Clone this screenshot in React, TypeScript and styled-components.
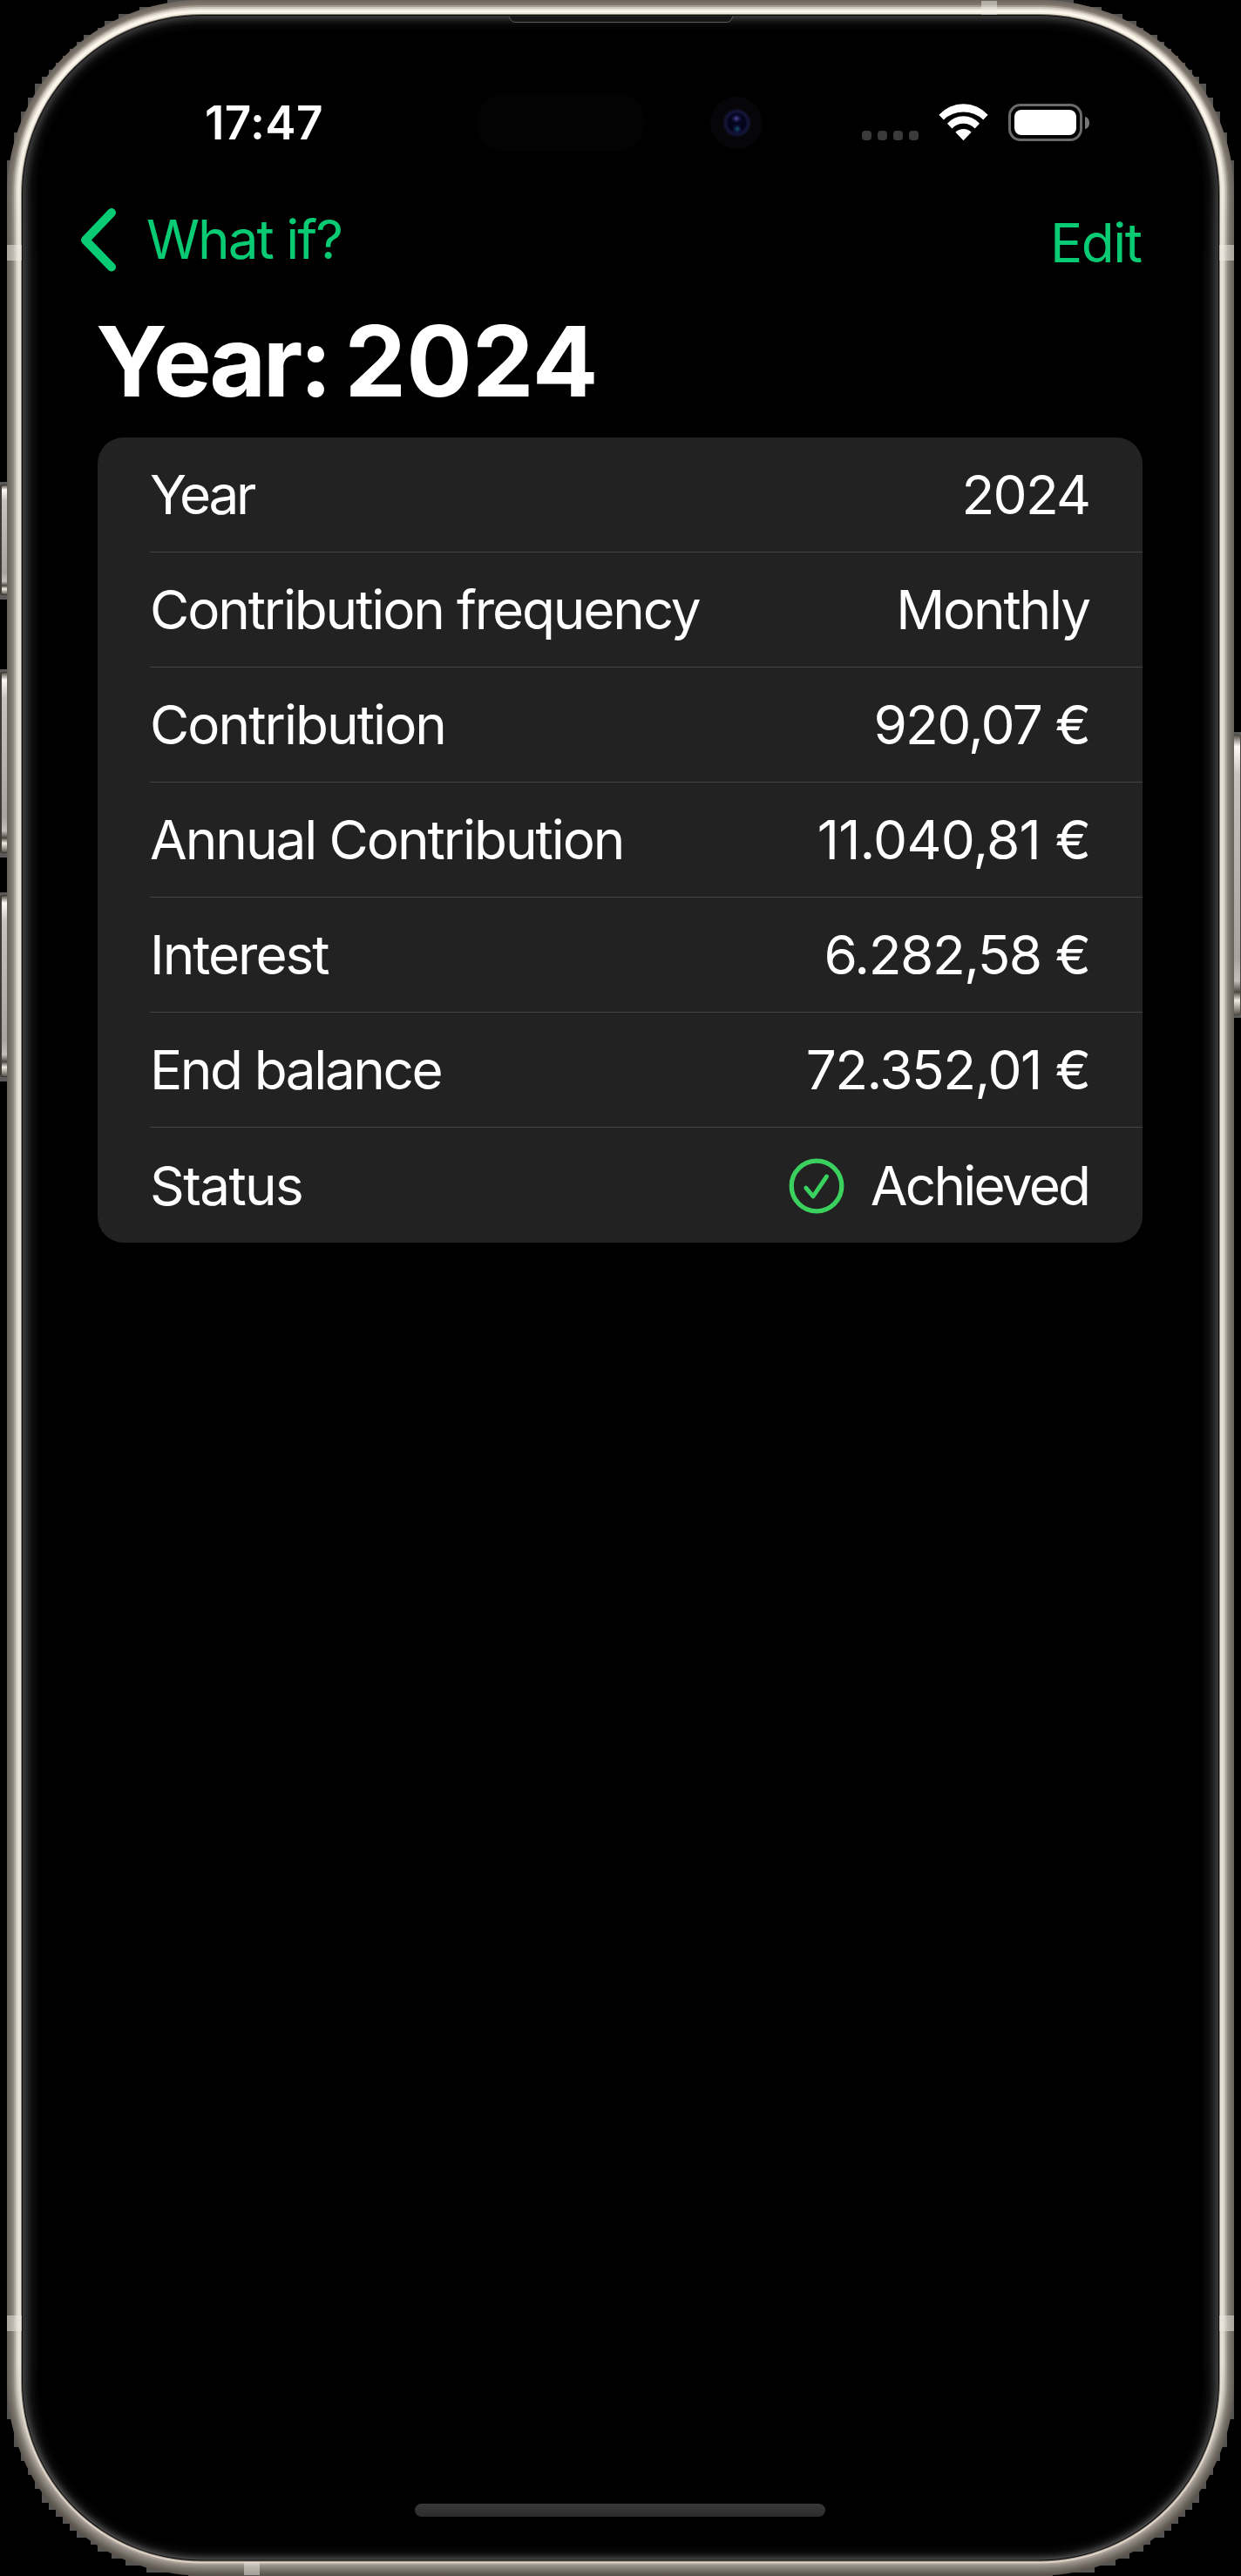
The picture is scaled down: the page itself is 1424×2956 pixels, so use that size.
import React from 'react';
import styled, { createGlobalStyle } from 'styled-components';

const GlobalStyle = createGlobalStyle`
  * { box-sizing: border-box; }
  html, body { margin: 0; background: #000; }
  body { font-family: Inter, "Liberation Sans", sans-serif; color: #fff; }
`;

const Stage = styled.div`
  position: relative;
  width: 1424px;
  height: 2956px;
  overflow: hidden;
  background: #000;
`;

const FrameSvg = styled.svg`
  position: absolute;
  inset: 0;
`;

const Screen = styled.main`
  position: relative;
  display: flex;
  flex-direction: column;
  height: 100%;
  padding: 106px 113px 68px 112px;
`;

const StatusBar = styled.header`
  display: flex;
  align-items: center;
  justify-content: space-between;
  height: 72px;
  padding: 0 61px 0 123px;
`;

const Label = styled.span<{ $size?: number; $weight?: number; $track?: number }>`
  font-size: ${p => p.$size ?? 62}px;
  font-weight: ${p => p.$weight ?? 400};
  letter-spacing: ${p => p.$track ?? 0}px;
  margin-right: ${p => -(p.$track ?? 0)}px;
  line-height: 1.2;
  white-space: nowrap;
`;

const Indicators = styled.div`
  display: flex;
  align-items: center;
  height: 43px;
  margin-bottom: 3px;
`;

const Signal = styled.div`
  display: flex;
  align-self: flex-end;
  gap: 7px;
  margin: 0 23px 1px 0;
`;

const Dot = styled.i`
  width: 11px;
  height: 11px;
  border-radius: 4px;
  background: #3a3a3a;
`;

const Battery = styled.div`
  width: 85px;
  height: 43px;
  margin-left: 23px;
  padding: 4px;
  border: 3px solid #6a6a6a;
  border-radius: 14px;
`;

const Charge = styled.div`
  height: 100%;
  border-radius: 8px;
  background: #fff;
`;

const Nub = styled.div`
  width: 5px;
  height: 14px;
  margin-left: 3px;
  border-radius: 0 5px 5px 0 / 0 7px 7px 0;
  background: #787878;
`;

const NavBar = styled.nav`
  display: flex;
  align-items: flex-start;
  justify-content: space-between;
  height: 142px;
  padding-top: 60px;
  color: #08cb73;
`;

const NavButton = styled.button<{ $back?: boolean }>`
  display: flex;
  align-items: center;
  gap: 35px;
  margin: ${p => (p.$back ? '0 0 0 -21px' : '4px 0 0 0')};
  padding: 0;
  border: 0;
  background: none;
  color: inherit;
  font-family: inherit;
`;

const Title = styled.h1`
  margin: 26px 0 0 -2px;
  height: 156px;
  font-size: 112px;
  font-weight: 700;
  line-height: 136px;
  letter-spacing: -3.6px;
  word-spacing: -5px;
  white-space: nowrap;
`;

const Digits = styled.span`
  letter-spacing: 0.2px;
`;

const Card = styled.section`
  display: flex;
  flex-direction: column;
  height: 924px;
  padding-left: 60px;
  border-radius: 30px;
  background: #222;
`;

const Row = styled.div`
  display: flex;
  align-items: center;
  justify-content: space-between;
  height: 132px;
  padding: 2px 59px 0 0;
  border-bottom: 1px solid #444;
  &:last-child { border-bottom: 0; }
`;

const Value = styled.div`
  display: flex;
  align-items: center;
  gap: 30px;
`;

const HomeBar = styled.div`
  width: 471px;
  height: 15px;
  margin: auto auto 0;
  border-radius: 8px;
  background: linear-gradient(#383838, #2c2c2c);
`;

const rows = [
  { name: 'Year', value: '2024', nameTrack: -3.3, valueTrack: -1.8 },
  { name: 'Contribution frequency', value: 'Monthly', nameTrack: -2.15, valueTrack: -2.2 },
  { name: 'Contribution', value: '920,07 €', nameTrack: -1.95, valueTrack: -1.75 },
  { name: 'Annual Contribution', value: '11.040,81 €', nameTrack: -2.05, valueTrack: -0.8 },
  { name: 'Interest', value: '6.282,58 €', nameTrack: -2, valueTrack: -1.5 },
  { name: 'End balance', value: '72.352,01 €', nameTrack: -2.4, valueTrack: -1.5 },
  { name: 'Status', value: 'Achieved', nameTrack: -1.6, valueTrack: -2.75, done: true },
];

// Titanium band, from the outer edge inwards: inset, then top / side / bottom tones.
const rings: [number, string, string, string][] = [
  [0, '#6f6860', '#69645d', '#5c554f'],
  [2, '#766f66', '#726d66', '#665f58'],
  [4, '#80786e', '#7d7870', '#706961'],
  [6, '#a39b8f', '#8e897f', '#7c756d'],
  [8, '#cfc8bc', '#aaa599', '#88817a'],
  [10, '#ece5da', '#cfcbbf', '#958e86'],
  [12, '#fff8ee', '#e3dfd2', '#a9a097'],
  [14, '#f2ebdf', '#e6e2d6', '#dfd4c8'],
  [16, '#8a8378', '#8f8a80', '#8a8178'],
  [17, '#0a0a0a', '#0c0c0c', '#050505'],
  [18, '#303030', '#393b3b', '#484848'],
  [19, '#343434', '#343636', '#3a3a3a'],
  [20, '#2a2a2a', '#2e2f2f', '#303030'],
  [22, '#1e1e1e', '#252626', '#1e1e1e'],
  [24, '#141414', '#1d1d1d', '#121212'],
  [26, '#0c0c0c', '#151515', '#0a0a0a'],
  [28, '#060606', '#0e0e0e', '#050505'],
  [31, '#030303', '#080808', '#020202'],
  [34, '#000', '#030303', '#000'],
  [37, '#000', '#000', '#000'],
];

// Left half of the 8px stepped silhouette; the right half is its mirror.
const stepsTop = [
  [8, 184], [16, 152], [24, 128], [32, 112], [40, 96], [48, 88], [56, 80], [64, 72],
  [72, 64], [80, 56], [88, 48], [96, 40], [112, 32], [120, 24], [136, 16], [160, 8], [192, 0],
];
const stepsBottom = [
  [216, 2956], [168, 2952], [144, 2944], [128, 2936], [112, 2928], [104, 2920], [88, 2912],
  [80, 2904], [72, 2896], [64, 2888], [56, 2880], [48, 2872], [40, 2856], [32, 2840],
  [24, 2824], [16, 2808], [8, 2776],
];

function silhouette() {
  let d = 'M8 2776';
  for (const [sx, sy] of stepsTop) d += `H${sx}V${sy}`;
  d += 'H1232';
  for (const [sx, sy] of [...stepsTop].reverse()) d += `V${sy}H${1424 - sx}`;
  for (const [sx, sy] of [...stepsBottom].reverse()) d += `H${1424 - sx}V${sy}`;
  d += 'H216';
  for (const [sx, sy] of stepsBottom) d += `V${sy}H${sx}`;
  return d + 'Z';
}

const leftKeys = [[553, 688], [768, 984], [1024, 1241]];

function Frame() {
  return (
    <FrameSvg width="1424" height="2956" viewBox="0 0 1424 2956" aria-hidden="true">
      <defs>
        {rings.map(([inset, a, b, c]) => (
          <linearGradient key={inset} id={`ring${inset}`} x1="0" y1="0" x2="0" y2="1">
            <stop offset="0" stopColor={a} />
            <stop offset="0.04" stopColor={a} />
            <stop offset="0.1" stopColor={b} />
            <stop offset="0.92" stopColor={b} />
            <stop offset="0.97" stopColor={c} />
            <stop offset="1" stopColor={c} />
          </linearGradient>
        ))}
        <linearGradient id="key" x1="0" y1="0" x2="0" y2="1">
          <stop offset="0" stopColor="#5a544e" />
          <stop offset="0.04" stopColor="#fffaf4" />
          <stop offset="0.14" stopColor="#c9c3be" />
          <stop offset="0.8" stopColor="#aaa49f" />
          <stop offset="0.88" stopColor="#c5bfba" />
          <stop offset="0.92" stopColor="#4d4741" />
          <stop offset="0.95" stopColor="#f2ece4" />
          <stop offset="1" stopColor="#5a544e" />
        </linearGradient>
        <radialGradient id="lens">
          <stop offset="0" stopColor="#05051c" />
          <stop offset="0.6" stopColor="#03031a" />
          <stop offset="0.8" stopColor="#15153a" />
          <stop offset="1" stopColor="#0c0c1c" />
        </radialGradient>
        <radialGradient id="glintTop">
          <stop offset="0" stopColor="#514fa0" />
          <stop offset="1" stopColor="#0a0a40" stopOpacity="0" />
        </radialGradient>
        <radialGradient id="glintBottom">
          <stop offset="0" stopColor="#12616a" />
          <stop offset="1" stopColor="#180a60" stopOpacity="0" />
        </radialGradient>
      </defs>
      <path d={silhouette()} fill="#555453" />
      {leftKeys.map(([top, bottom]) => (
        <g key={top}>
          <rect x="0" y={top} width="8" height={bottom - top} fill="#5b5a58" />
          <rect x="0" y={top + 3} width="12" height={bottom - top - 8} rx="3" fill="#3d3934" />
          <rect x="2" y={top + 4} width="10" height={bottom - top - 10} rx="2" fill="url(#key)" />
        </g>
      ))}
      <rect x="1416" y="840" width="8" height="328" fill="#5b5a58" />
      <rect x="1412" y="843" width="12" height="322" rx="3" fill="#4a453f" />
      <rect x="1412" y="844" width="11" height="320" rx="2" fill="url(#key)" />
      {rings.map(([inset]) => (
        <rect
          key={inset}
          x={8 + inset}
          y={inset}
          width={1408 - inset * 2}
          height={2955.5 - inset * 2}
          rx={223 - inset}
          fill={`url(#ring${inset})`}
        />
      ))}
      <g fill="#f0e9e4" fillOpacity="0.5">
        <rect x="8" y="281" width="17" height="18" />
        <rect x="1399" y="281" width="17" height="18" />
        <rect x="8" y="2657" width="17" height="18" />
        <rect x="1399" y="2657" width="17" height="18" />
        <rect x="1126" y="1" width="18" height="16" />
        <rect x="280" y="2940" width="18" height="15" />
      </g>
      <path d="M584 18.5C587 25.5 588 25.5 594 25.5H831C837 25.5 838 25.5 841 18.5" fill="#161616" stroke="#5c5c5c" />
      <rect x="547" y="107" width="193" height="67" rx="33" fill="#030303" />
      <circle cx="845" cy="141" r="30" fill="#060508" />
      <circle cx="845.5" cy="141" r="16" fill="url(#lens)" />
      <ellipse cx="845" cy="136" rx="7" ry="6" fill="url(#glintTop)" />
      <circle cx="846" cy="148" r="6" fill="url(#glintBottom)" />
    </FrameSvg>
  );
}

function Wifi() {
  return (
    <svg width="57" height="43" viewBox="0 0 57 43" fill="#fff" aria-hidden="true">
      <path d="M.4 12.8A37.7 37.7 0 0 1 56.6 12.8L51.2 18.4A33.5 33.5 0 0 0 5.8 18.4Z" />
      <path d="M10 22.8A24.5 24.5 0 0 1 47 22.8L41.6 28.4A18 18 0 0 0 15.4 28.4Z" />
      <path d="M19.4 32.8A13 13 0 0 1 37.6 32.8L28.5 42.3Z" />
    </svg>
  );
}

function Chevron() {
  return (
    <svg width="42" height="74" viewBox="0 0 42 74" fill="none" stroke="currentColor" strokeWidth="10" strokeLinecap="round" strokeLinejoin="round" aria-hidden="true">
      <path d="M37 6L7 37.5L37 68.5" />
    </svg>
  );
}

function CheckCircle() {
  return (
    <svg width="64" height="64" viewBox="0 0 64 64" fill="none" stroke="#3ad15f" strokeWidth="5.3" strokeLinecap="round" strokeLinejoin="round" aria-hidden="true">
      <circle cx="32" cy="32" r="28.8" />
      <path d="M19.8 34.2L28 43.8L43.6 21" strokeWidth="4.9" />
    </svg>
  );
}

export default function App() {
  return (
    <>
      <GlobalStyle />
      <Stage>
        <Frame />
        <Screen>
          <StatusBar>
            <Label $size={53} $weight={600} $track={0.4}>17:47</Label>
            <Indicators>
              <Signal><Dot /><Dot /><Dot /><Dot /></Signal>
              <Wifi />
              <Battery><Charge /></Battery>
              <Nub />
            </Indicators>
          </StatusBar>
          <NavBar>
            <NavButton $back>
              <Chevron />
              <Label $track={-2}>What if?</Label>
            </NavButton>
            <NavButton>
              <Label $track={-1.5}>Edit</Label>
            </NavButton>
          </NavBar>
          <Title>Year: <Digits>2024</Digits></Title>
          <Card>
            {rows.map(r => (
              <Row key={r.name}>
                <Label $track={r.nameTrack}>{r.name}</Label>
                <Value>
                  {r.done && <CheckCircle />}
                  <Label $track={r.valueTrack}>{r.value}</Label>
                </Value>
              </Row>
            ))}
          </Card>
          <HomeBar />
        </Screen>
      </Stage>
    </>
  );
}
